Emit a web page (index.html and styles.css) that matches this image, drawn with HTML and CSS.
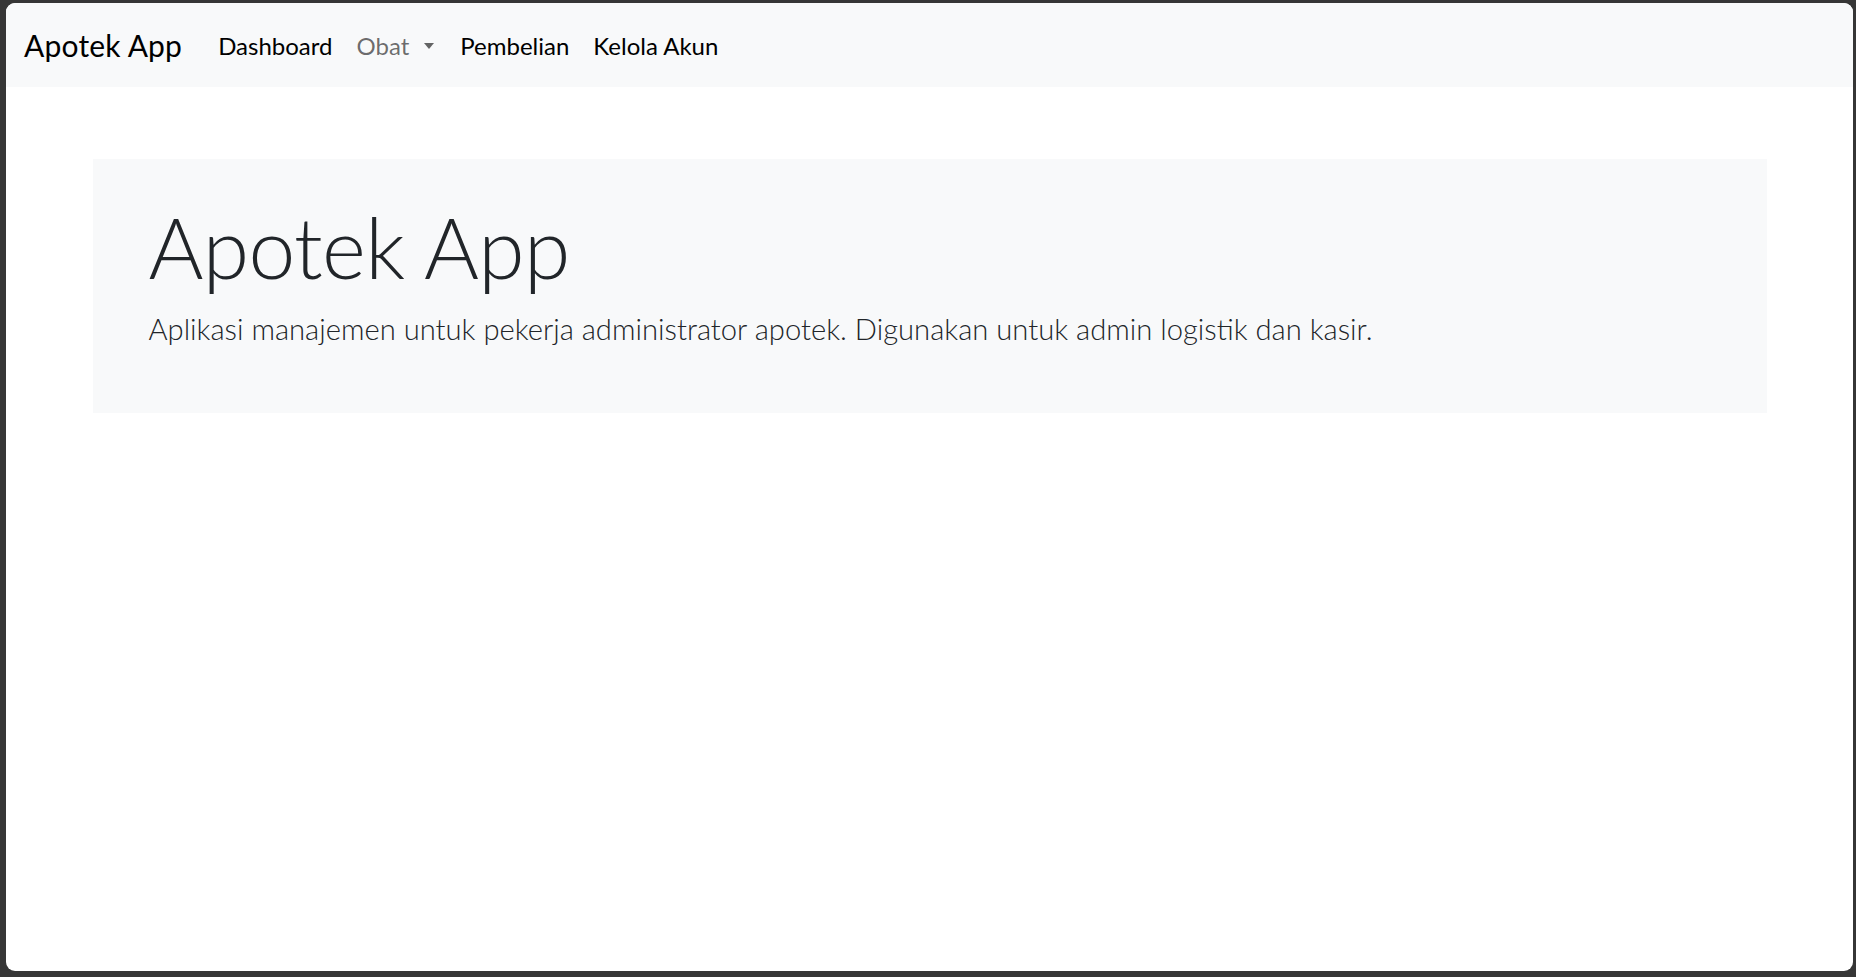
FILE: index.html
```html
<!DOCTYPE html>
<html lang="id">
<head>
<meta charset="utf-8">
<title>Apotek App</title>
<link rel="stylesheet" href="styles.css">
</head>
<body>
<div class="window">
  <nav class="navbar">
    <a class="brand" href="#">Apotek App</a>
    <ul class="nav">
      <li><a class="nav-link dark" href="#">Dashboard</a></li>
      <li><a class="nav-link muted dropdown" href="#">Obat<span class="caret"></span></a></li>
      <li><a class="nav-link dark" href="#">Pembelian</a></li>
      <li><a class="nav-link dark" href="#">Kelola Akun</a></li>
    </ul>
  </nav>
  <main class="container">
    <section class="jumbotron">
      <h1 class="display">Apotek App</h1>
      <p class="lead">Aplikasi manajemen untuk pekerja administrator apotek. Digunakan untuk admin logistik dan kasir.</p>
    </section>
  </main>
</div>
</body>
</html>
```
FILE: styles.css
```css
html, body {
  margin: 0;
  padding: 0;
  height: 100%;
}
body {
  background: #363636;
  font-family: Lato, "Open Sans", sans-serif;
  overflow: hidden;
}
.window {
  box-sizing: border-box;
  margin: 3px 3px 0 6px;
  height: calc(100% - 9px);
  background: #ffffff;
  border-radius: 9px;
  overflow: hidden;
}
.navbar {
  height: 84px;
  background: #f8f9fa;
  display: flex;
  align-items: center;
  padding-left: 18px;
}
.brand {
  font-size: 30px;
  color: #000;
  text-decoration: none;
  margin-right: 24px;
  letter-spacing: 0.2px;
}
.nav {
  list-style: none;
  margin: 0;
  padding: 0;
  display: flex;
  align-items: center;
}
.nav-link {
  display: flex;
  align-items: center;
  font-size: 24px;
  padding: 0 12px;
  text-decoration: none;
}
.nav-link.dark { color: #000; }
.nav-link.muted { color: rgba(0, 0, 0, 0.58); }
.caret {
  display: inline-block;
  margin-left: 15px;
  margin-right: 2px;
  margin-top: 1px;
  width: 0;
  height: 0;
  border-top: 6px solid rgba(0, 0, 0, 0.6);
  border-left: 5.5px solid transparent;
  border-right: 5.5px solid transparent;
}
.container {
  width: 1674px;
  margin: 72px auto 0;
}
.jumbotron {
  background: #f8f9fa;
  height: 254px;
  box-sizing: border-box;
  padding: 38px 0 0 56px;
}
.display {
  margin: 0;
  font-size: 84px;
  font-weight: 300;
  line-height: 1.2;
  letter-spacing: -0.6px;
  color: #212529;
}
.lead {
  margin: 9px 0 0;
  font-size: 29.2px;
  font-weight: 300;
  line-height: 1.5;
  color: #212529;
}
```
